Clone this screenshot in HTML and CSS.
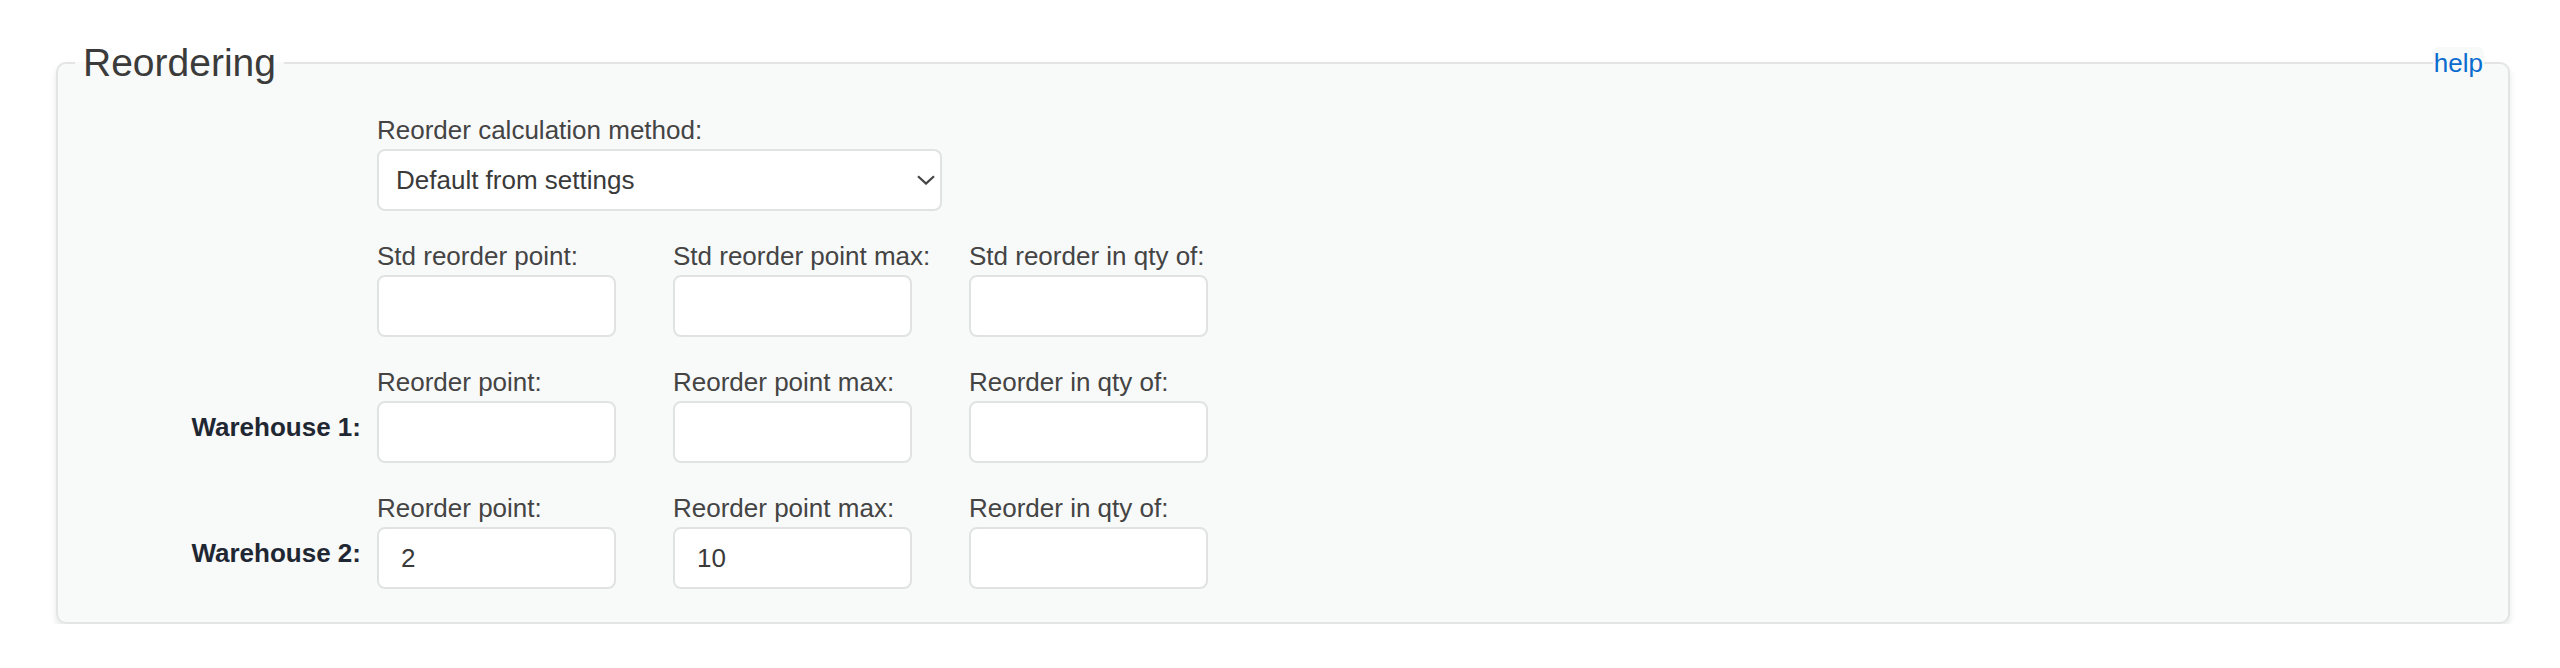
FILE: index.html
```html
<!DOCTYPE html>
<html lang="en">
<head>
<meta charset="utf-8">
<title>Reordering</title>
<link rel="stylesheet" href="styles.css">
</head>
<body>
<div class="section">
  <fieldset class="panel">
    <legend class="panel-title">Reordering</legend>
    <div class="form">
      <div class="row">
        <div class="row-label"></div>
        <div class="field field-wide">
          <label class="field-label" for="method">Reorder calculation method:</label>
          <div class="select-wrap">
            <select id="method" class="select">
              <option>Default from settings</option>
            </select>
            <svg class="chevron" width="18" height="10" viewBox="0 0 18 10" aria-hidden="true"><path d="M1 1.2 L9 8.6 L17 1.2" fill="none" stroke="#444" stroke-width="2.2"/></svg>
          </div>
        </div>
      </div>
      <div class="row">
        <div class="row-label"></div>
        <div class="fields">
          <div class="field"><label class="field-label">Std reorder point:</label><input class="input" type="text"></div>
          <div class="field"><label class="field-label">Std reorder point max:</label><input class="input" type="text"></div>
          <div class="field"><label class="field-label">Std reorder in qty of:</label><input class="input" type="text"></div>
        </div>
      </div>
      <div class="row">
        <div class="row-label">Warehouse 1:</div>
        <div class="fields">
          <div class="field"><label class="field-label">Reorder point:</label><input class="input" type="text"></div>
          <div class="field"><label class="field-label">Reorder point max:</label><input class="input" type="text"></div>
          <div class="field"><label class="field-label">Reorder in qty of:</label><input class="input" type="text"></div>
        </div>
      </div>
      <div class="row">
        <div class="row-label">Warehouse 2:</div>
        <div class="fields">
          <div class="field"><label class="field-label">Reorder point:</label><input class="input" type="text" value="2"></div>
          <div class="field"><label class="field-label">Reorder point max:</label><input class="input" type="text" value="10"></div>
          <div class="field"><label class="field-label">Reorder in qty of:</label><input class="input" type="text"></div>
        </div>
      </div>
    </div>
  </fieldset>
  <a class="help" href="#">help</a>
</div>
</body>
</html>
```

FILE: styles.css
```css
html, body {
  margin: 0;
  padding: 0;
  background: #ffffff;
}

body {
  font-family: "Liberation Sans", Arial, Helvetica, sans-serif;
  font-size: 26px;
  color: #444444;
}

.section {
  position: relative;
  margin: 40px 50px 0 56px;
}

.panel {
  margin: 0;
  min-width: 0;
  padding: 25px 24px 33px 17px;
  border: 2px solid #e3e4e4;
  border-radius: 10px;
  background: #f8f9f9;
  box-shadow: 0 4px 6px rgba(0, 0, 0, 0.1);
}

.panel-title {
  padding: 0 8px;
  font-size: 39px;
  line-height: 46px;
  color: #3b3b3b;
}

.form {
  display: flex;
  flex-direction: column;
  gap: 26px;
}

.row {
  display: flex;
  align-items: flex-end;
}

.row-label {
  width: 286px;
  margin-right: 16px;
  margin-bottom: 21px;
  text-align: right;
  font-weight: bold;
  font-size: 26px;
  line-height: 30px;
  color: #1f2733;
  flex: none;
}

.fields {
  display: flex;
  gap: 57px;
}

.field {
  display: flex;
  flex-direction: column;
  width: 239px;
}

.field-wide {
  width: 565px;
}

.field-label {
  display: block;
  line-height: 38px;
  white-space: nowrap;
  color: #444444;
}

.input,
.select {
  box-sizing: border-box;
  width: 100%;
  height: 62px;
  margin: 0;
  border: 2px solid #e1e2e2;
  border-radius: 8px;
  background: #ffffff;
  font-family: inherit;
  font-size: 26px;
  color: #3a3a3a;
  outline: none;
}

.input {
  padding: 0 22px;
}

.select-wrap {
  position: relative;
}

.select {
  -webkit-appearance: none;
  appearance: none;
  padding: 0 40px 0 17px;
}

.chevron {
  position: absolute;
  right: 7px;
  top: 26px;
  pointer-events: none;
}

.help {
  position: absolute;
  top: 7px;
  right: 26px;
  padding: 0 1px;
  font-size: 26px;
  line-height: 32px;
  color: #0a6cce;
  text-decoration: none;
  background: #f8f9f9;
  border-radius: 6px;
}
```
